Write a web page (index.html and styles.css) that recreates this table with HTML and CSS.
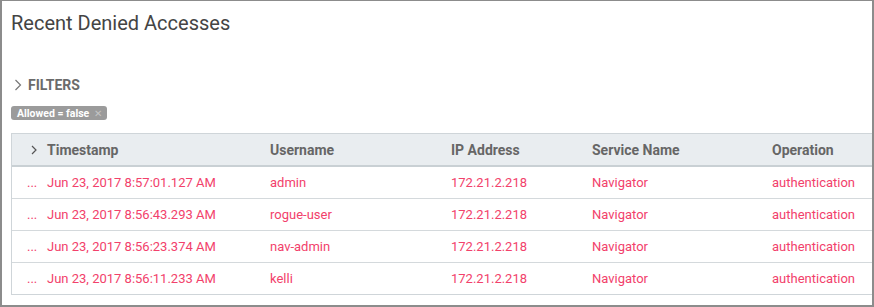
FILE: index.html
```html
<!DOCTYPE html>
<html lang="en">
<head>
    <meta charset="UTF-8">
    <title>Recent Denied Accesses</title>
    <link rel="stylesheet" href="styles.css">
</head>
<body>
    <div class="panel">
        <h1>Recent Denied Accesses</h1>

        <div class="filters">
            <svg class="chevron" width="8" height="12" viewBox="0 0 8 12"><path d="M1.5 1 L6.5 6 L1.5 11" fill="none" stroke="#777" stroke-width="1.2"/></svg>
            <span>FILTERS</span>
        </div>
        <div class="chips">
            <span class="chip">Allowed = false <span class="chip-x">&#x2715;</span></span>
        </div>

        <div class="table">
            <div class="row head">
                <div class="cell ctl"><svg width="6" height="10" viewBox="0 0 6 10"><path d="M1 1 L5 5 L1 9" fill="none" stroke="#555" stroke-width="1.2"/></svg></div>
                <div class="cell">Timestamp</div>
                <div class="cell">Username</div>
                <div class="cell">IP Address</div>
                <div class="cell">Service Name</div>
                <div class="cell">Operation</div>
            </div>
            <div class="row">
                <div class="cell ctl">...</div>
                <div class="cell">Jun 23, 2017 8:57:01.127 AM</div>
                <div class="cell">admin</div>
                <div class="cell">172.21.2.218</div>
                <div class="cell">Navigator</div>
                <div class="cell">authentication</div>
            </div>
            <div class="row">
                <div class="cell ctl">...</div>
                <div class="cell">Jun 23, 2017 8:56:43.293 AM</div>
                <div class="cell">rogue-user</div>
                <div class="cell">172.21.2.218</div>
                <div class="cell">Navigator</div>
                <div class="cell">authentication</div>
            </div>
            <div class="row">
                <div class="cell ctl">...</div>
                <div class="cell">Jun 23, 2017 8:56:23.374 AM</div>
                <div class="cell">nav-admin</div>
                <div class="cell">172.21.2.218</div>
                <div class="cell">Navigator</div>
                <div class="cell">authentication</div>
            </div>
            <div class="row">
                <div class="cell ctl">...</div>
                <div class="cell">Jun 23, 2017 8:56:11.233 AM</div>
                <div class="cell">kelli</div>
                <div class="cell">172.21.2.218</div>
                <div class="cell">Navigator</div>
                <div class="cell">authentication</div>
            </div>
        </div>
    </div>
</body>
</html>
```

FILE: styles.css
```css
* {
    margin: 0;
    padding: 0;
    box-sizing: border-box;
}

body {
    font-family: Roboto, "Liberation Sans", sans-serif;
    background: #fff;
}

.panel {
    width: 874px;
    height: 307px;
    border: 2px solid #8c8c8c;
    border-top-width: 1px;
    padding: 9px 0 0 9px;
    overflow: hidden;
}

h1 {
    font-size: 20px;
    font-weight: 400;
    color: #444;
    line-height: 26px;
    margin-bottom: 41px;
}

.filters {
    display: flex;
    align-items: center;
    gap: 6px;
    height: 16px;
    padding-left: 3px;
    font-size: 14px;
    font-weight: 700;
    color: #6b6b6b;
}

.chips {
    display: flex;
    margin-top: 13px;
    height: 14px;
}

.chip {
    display: inline-flex;
    align-items: center;
    height: 14px;
    padding: 0 5px 0 6px;
    background: #9b9b9b;
    border-radius: 3px;
    color: #fff;
    font-size: 10.5px;
    font-weight: 700;
}

.chip-x {
    margin-left: 5px;
    font-size: 10px;
    font-weight: 400;
    color: #c4c4c4;
}

.table {
    margin-top: 13px;
    width: 980px;
    border: 1px solid #cfd5d9;
}

.row {
    display: grid;
    grid-template-columns: 35px 223px 181px 141px 180px 1fr;
    height: 32px;
    align-items: center;
    border-top: 1px solid #d4d9dc;
    font-size: 13px;
    color: #f2416b;
}

.row.head {
    height: 32px;
    border-top: none;
    border-bottom: 1px solid #c9d0d4;
    background: #e9edf0;
    color: #666;
    font-size: 14px;
    font-weight: 700;
}

.row.head + .row {
    border-top: 1px solid #c9d0d4;
}

.cell {
    white-space: nowrap;
}

.ctl {
    padding-left: 15px;
    display: flex;
    align-items: center;
}

.head .ctl {
    padding-left: 19px;
}
```
